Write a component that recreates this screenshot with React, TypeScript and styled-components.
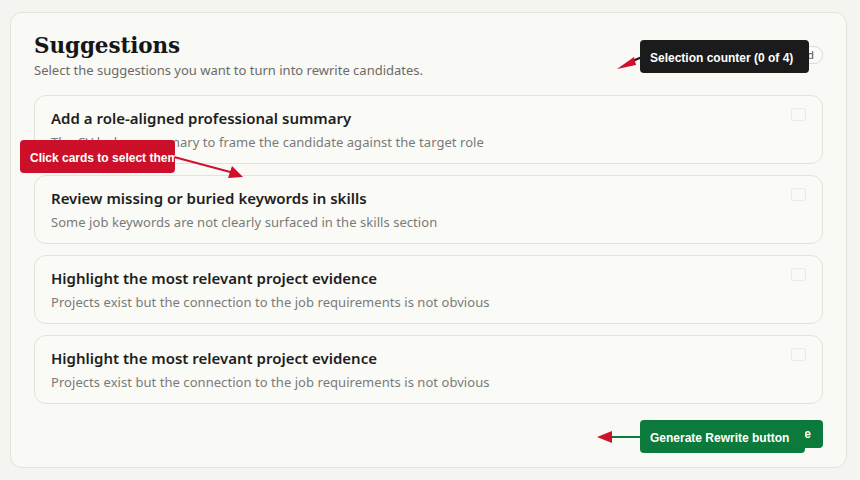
import React from "react";
import styled, { createGlobalStyle } from "styled-components";

const Global = createGlobalStyle`
  html, body { margin: 0; padding: 0; background: #f4f4f0; }
  body { font-family: "Noto Sans", "Open Sans", sans-serif; }
  * { box-sizing: border-box; }
`;

const Page = styled.div`
  position: relative;
  width: 860px;
  height: 480px;
  padding: 12px 13px 12px 10px;
`;

const Panel = styled.section`
  height: 456px;
  background: #f9f9f6;
  border: 1px solid #e3e3de;
  border-radius: 12px;
  padding: 19px 23px 0 23px;
  display: flex;
  flex-direction: column;
`;

const Header = styled.header`
  display: flex;
  justify-content: space-between;
  align-items: flex-start;
`;

const TitleBlock = styled.div`
  display: flex;
  flex-direction: column;
`;

const Title = styled.h1`
  margin: 0;
  font-family: "DejaVu Serif", Georgia, serif;
  font-weight: 700;
  font-size: 21.5px;
  line-height: 28px;
  color: #161616;
  letter-spacing: -0.1px;
`;

const Subtitle = styled.p`
  margin: 1px 0 0;
  font-size: 13px;
  line-height: 18px;
  color: #6b6b66;
`;

const Counter = styled.span`
  margin-top: 14px;
  border: 1px solid #dcdcd6;
  border-radius: 9px;
  padding: 0 8px;
  font-size: 11px;
  line-height: 16px;
  color: #555;
  background: #fbfbf9;
`;

const List = styled.div`
  margin-top: 16px;
  display: flex;
  flex-direction: column;
  gap: 11px;
`;

const Card = styled.div`
  position: relative;
  height: 69px;
  border: 1px solid #e2e2dc;
  border-radius: 12px;
  background: #fafaf7;
  padding: 12px 16px 0 16px;
  display: flex;
  flex-direction: column;
  gap: 5px;
`;

const CardTitle = styled.div`
  font-size: 15px;
  font-weight: 600;
  line-height: 20px;
  color: #1e1e1e;
`;

const CardDesc = styled.div`
  font-size: 13px;
  line-height: 18px;
  color: #7a7a77;
  letter-spacing: 0.05px;
`;

const Check = styled.span`
  position: absolute;
  top: 12px;
  right: 16px;
  width: 15px;
  height: 13px;
  border: 1px solid #ebebe6;
  border-radius: 3px;
`;

const Footer = styled.div`
  margin-top: 16px;
  display: flex;
  justify-content: flex-end;
`;

const GenerateButton = styled.button`
  height: 28px;
  border: none;
  border-radius: 4px;
  background: #0b7a3b;
  color: #fff;
  font-family: "Liberation Sans", Arial, sans-serif;
  font-weight: 700;
  font-size: 12px;
  padding: 0 12px;
`;

const Tip = styled.div<{ $bg: string; $x: number; $y: number; $w: number }>`
  position: absolute;
  left: ${(p) => p.$x}px;
  top: ${(p) => p.$y}px;
  width: ${(p) => p.$w}px;
  height: 33px;
  background: ${(p) => p.$bg};
  color: #fff;
  border-radius: 4px;
  padding: 0 10px;
  font-family: "Liberation Sans", Arial, sans-serif;
  font-weight: 700;
  font-size: 12px;
  line-height: 36px;
  white-space: nowrap;
  overflow: hidden;
`;

const Arrows = styled.svg`
  position: absolute;
  left: 0;
  top: 0;
  pointer-events: none;
`;

const cards = [
  {
    t: "Add a role-aligned professional summary",
    d: "The CV lacks a summary to frame the candidate against the target role",
  },
  {
    t: "Review missing or buried keywords in skills",
    d: "Some job keywords are not clearly surfaced in the skills section",
  },
  {
    t: "Highlight the most relevant project evidence",
    d: "Projects exist but the connection to the job requirements is not obvious",
  },
  {
    t: "Highlight the most relevant project evidence",
    d: "Projects exist but the connection to the job requirements is not obvious",
  },
];

export default function App() {
  return (
    <Page>
      <Global />
      <Panel>
        <Header>
          <TitleBlock>
            <Title>Suggestions</Title>
            <Subtitle>Select the suggestions you want to turn into rewrite candidates.</Subtitle>
          </TitleBlock>
          <Counter>0 selected</Counter>
        </Header>
        <List>
          {cards.map((c, i) => (
            <Card key={i}>
              <CardTitle>{c.t}</CardTitle>
              <CardDesc>{c.d}</CardDesc>
              <Check />
            </Card>
          ))}
        </List>
        <Footer>
          <GenerateButton>Generate Rewrite</GenerateButton>
        </Footer>
      </Panel>

      <Arrows width="860" height="480" viewBox="0 0 860 480">
        <line x1="642" y1="57" x2="628" y2="63" stroke="#1a1a1a" strokeWidth="2" />
        <polygon points="617,69 634,57 636,65" fill="#d0112b" />
        <line x1="174" y1="157" x2="234" y2="173" stroke="#d0112b" strokeWidth="2" />
        <polygon points="243,177 228,178 232,166" fill="#d0112b" />
        <line x1="641" y1="437" x2="611" y2="437" stroke="#0b7a3b" strokeWidth="2" />
        <polygon points="597,437 612,431 612,443" fill="#d0112b" />
      </Arrows>

      <Tip $bg="#1b1b1b" $x={640} $y={40} $w={169}>Selection counter (0 of 4)</Tip>
      <Tip $bg="#cc1029" $x={20} $y={140} $w={155}>Click cards to select them</Tip>
      <Tip $bg="#0b7a3b" $x={640} $y={420} $w={165}>Generate Rewrite button</Tip>
    </Page>
  );
}
